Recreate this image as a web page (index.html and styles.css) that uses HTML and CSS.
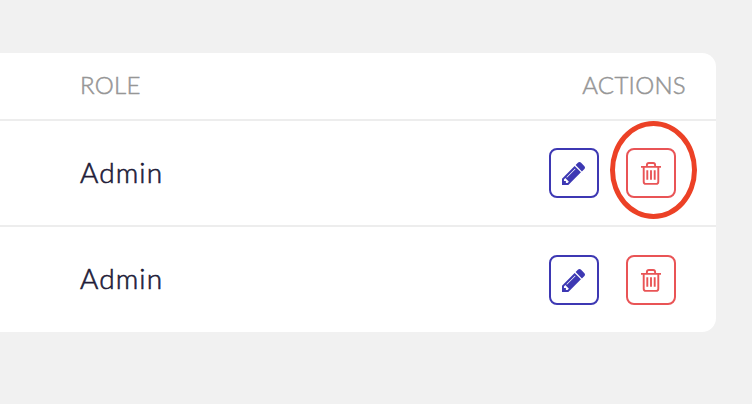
FILE: index.html
```html
<!DOCTYPE html>
<html lang="en">
<head>
    <meta charset="UTF-8">
    <title>Users</title>
    <link rel="stylesheet" href="styles.css">
</head>
<body>
    <svg class="symbols" width="0" height="0">
        <symbol id="pencil" viewBox="128 149 1515 1515">
            <path fill="currentColor" d="M491 1536l91-91-235-235-91 91v107h128v128h107zm523-928q0-22-22-22-10 0-17 7l-542 542q-7 7-7 17 0 22 22 22 10 0 17-7l542-542q7-7 7-17zm-54-192l416 416-832 832h-416v-416zm683 96q0 53-37 90l-166 166-416-416 166-165q36-38 90-38 53 0 91 38l235 234q37 39 37 91z"/>
        </symbol>
        <symbol id="trash" viewBox="0 0 20 23">
            <g fill="none" stroke="currentColor" stroke-width="1.9">
                <path d="M0 4.9h20M5.9 4.5V3q0-2 2-2h4.2q2 0 2 2v1.5"/>
                <path d="M2.7 5v14.7q0 2.2 2.2 2.2h10.2q2.2 0 2.2-2.2V5"/>
                <path d="M6.3 8.3v9.4M10 8.3v9.4M13.7 8.3v9.4"/>
            </g>
        </symbol>
    </svg>

    <div class="card">
        <div class="row header">
            <span>ROLE</span>
            <span class="actions-title">ACTIONS</span>
        </div>
        <div class="row">
            <span class="role">Admin</span>
            <div class="actions">
                <button class="btn edit"><svg class="pencil"><use href="#pencil"/></svg></button>
                <button class="btn delete"><svg class="trash"><use href="#trash"/></svg></button>
            </div>
        </div>
        <div class="row">
            <span class="role">Admin</span>
            <div class="actions">
                <button class="btn edit"><svg class="pencil"><use href="#pencil"/></svg></button>
                <button class="btn delete"><svg class="trash"><use href="#trash"/></svg></button>
            </div>
        </div>
    </div>

    <div class="highlight"></div>
</body>
</html>
```

FILE: styles.css
```css
body {
    margin: 0;
    padding: 53px 36px 0 0;
    background-color: #f1f1f1;
    font-family: Lato, "Open Sans", sans-serif;
}

.symbols {
    position: absolute;
}

.card {
    height: 279px;
    background-color: #fff;
    border-radius: 0 14px 14px 0;
}

.row {
    display: flex;
    justify-content: space-between;
    align-items: center;
    box-sizing: border-box;
    height: 106px;
    padding: 0 40px 0 80px;
    border-bottom: 2px solid #ededed;
}

.row:last-child {
    height: 105px;
    padding-top: 1px;
    border-bottom: none;
}

.header {
    height: 68px;
    padding: 0 30px 4px 80px;
    font-size: 24px;
    font-weight: 300;
    letter-spacing: 0.3px;
    color: #969696;
    -webkit-text-stroke: 0.5px #969696;
}

.role {
    padding-bottom: 3px;
    font-size: 28px;
    font-weight: 300;
    letter-spacing: 1.1px;
    color: #211b38;
    -webkit-text-stroke: 0.6px #211b38;
}

.row:last-child .role {
    padding-bottom: 5px;
}

.actions {
    display: flex;
    gap: 27px;
}

.btn {
    display: flex;
    justify-content: center;
    align-items: center;
    box-sizing: border-box;
    width: 50px;
    height: 50px;
    padding: 0;
    background-color: #fff;
    border: 2px solid currentColor;
    border-radius: 8px;
}

.edit {
    color: #3d38b3;
}

.delete {
    color: #e95456;
}

.pencil {
    width: 23px;
    height: 23px;
    margin-right: 1px;
}

.trash {
    width: 20px;
    height: 23px;
}

.highlight {
    position: absolute;
    left: 610px;
    top: 121px;
    box-sizing: border-box;
    width: 87px;
    height: 98px;
    border: 5px solid #ec4126;
    border-radius: 50%;
}
```
